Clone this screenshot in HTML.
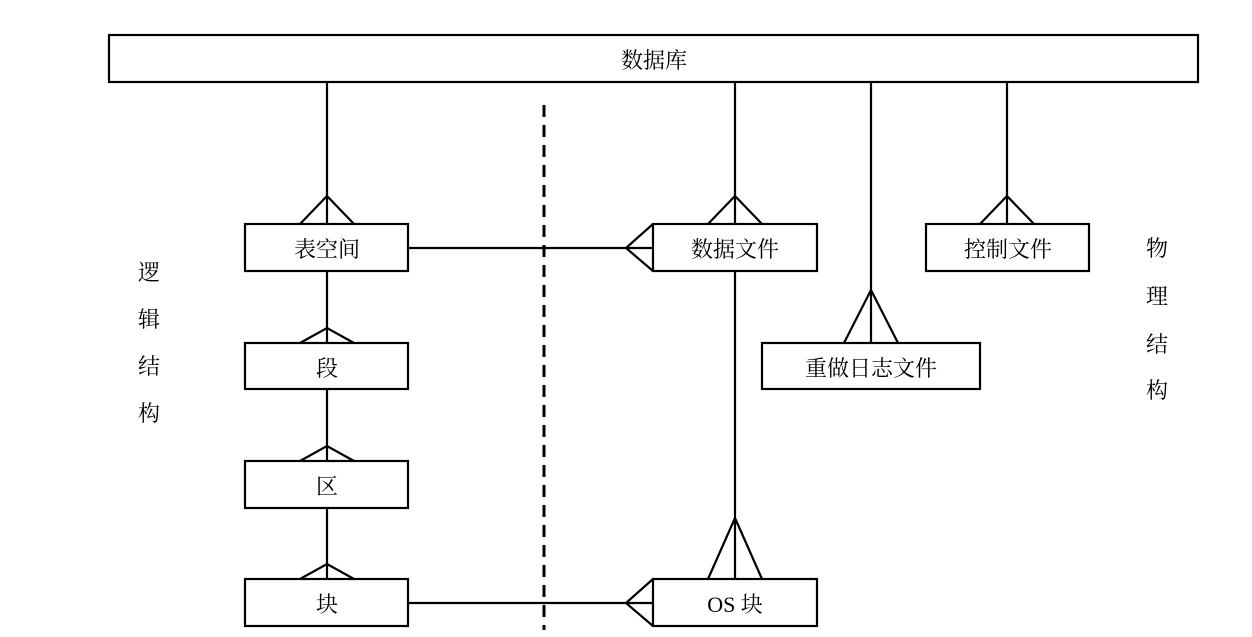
<!DOCTYPE html>
<html><head><meta charset="utf-8"><style>
html,body{margin:0;padding:0;background:#fff;}
svg{display:block}
text{font-family:"Liberation Serif","Noto Serif CJK SC",serif;font-size:22px;fill:#000;}
</style></head><body>
<svg width="1252" height="637" viewBox="0 0 1252 637" xmlns="http://www.w3.org/2000/svg">
<g fill="none" stroke="#000" stroke-width="2.2">
<rect x="109" y="35" width="1089" height="47"/>
<rect x="245" y="224" width="163" height="47"/>
<rect x="245" y="343" width="163" height="46"/>
<rect x="245" y="461" width="163" height="47"/>
<rect x="245" y="579" width="163" height="47"/>
<rect x="653" y="224" width="164" height="47"/>
<rect x="926" y="224" width="163" height="47"/>
<rect x="762" y="343" width="218" height="46"/>
<rect x="653" y="579" width="164" height="47"/>
<path d="M327 82V224 M300 224L327 196L354 224"/>
<path d="M327 271V343 M300 343L327 328L354 343"/>
<path d="M327 389V461 M300 461L327 446L354 461"/>
<path d="M327 508V579 M300 579L327 564L354 579"/>
<path d="M735 82V224 M708 224L735 196L762 224"/>
<path d="M871 82V343 M844 343L871 290L898 343"/>
<path d="M1007 82V224 M980 224L1007 196L1034 224"/>
<path d="M735 271V579 M708 579L735 518L762 579"/>
<path d="M408 248H653 M653 224L626 248L653 271"/>
<path d="M408 603H653 M653 579L626 603L653 626"/>
<path d="M544 105V630" stroke-width="3" stroke-dasharray="12,8"/>
</g>
<g text-anchor="middle">
<text x="654" y="68">数据库</text>
<text x="327" y="257">表空间</text>
<text x="327" y="376">段</text>
<text x="327" y="494">区</text>
<text x="327" y="612">块</text>
<text x="735" y="257">数据文件</text>
<text x="1008" y="257">控制文件</text>
<text x="871" y="376">重做日志文件</text>
<text x="735" y="612">OS 块</text>
<text x="149" y="280">逻</text>
<text x="149" y="327">辑</text>
<text x="149" y="374">结</text>
<text x="149" y="421">构</text>
<text x="1157" y="256">物</text>
<text x="1157" y="304">理</text>
<text x="1157" y="352">结</text>
<text x="1157" y="398">构</text>
</g>
</svg>
</body></html>
